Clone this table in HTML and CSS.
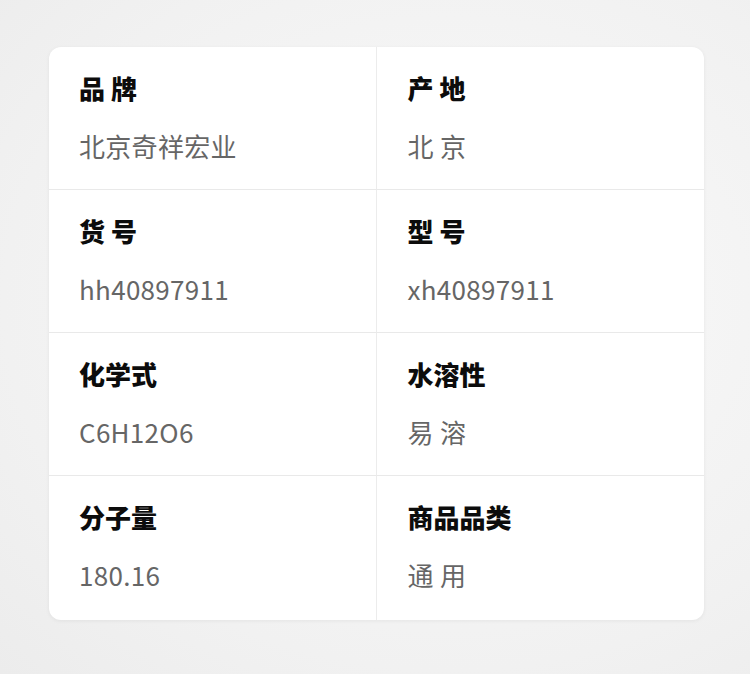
FILE: index.html
```html
<!DOCTYPE html>
<html lang="zh-CN">

<head>
    <meta charset="UTF-8">
    <meta name="viewport" content="width=device-width, initial-scale=1.0">
    <title>商品参数</title>
    <link rel="stylesheet" href="styles.css">
</head>

<body>

    <div class="spec-card">
        <div class="spec-item">
            <h3>品 牌</h3>
            <p>北京奇祥宏业</p>
        </div>
        <div class="spec-item">
            <h3>产 地</h3>
            <p>北 京</p>
        </div>
        <div class="spec-item">
            <h3>货 号</h3>
            <p>hh40897911</p>
        </div>
        <div class="spec-item">
            <h3>型 号</h3>
            <p>xh40897911</p>
        </div>
        <div class="spec-item">
            <h3>化学式</h3>
            <p>C6H12O6</p>
        </div>
        <div class="spec-item">
            <h3>水溶性</h3>
            <p>易 溶</p>
        </div>
        <div class="spec-item">
            <h3>分子量</h3>
            <p>180.16</p>
        </div>
        <div class="spec-item">
            <h3>商品品类</h3>
            <p>通 用</p>
        </div>
    </div>

</body>

</html>
```

FILE: styles.css
```css
/* Resetting styles */
* {
    margin: 0;
    padding: 0;
    box-sizing: border-box;
}

body {
    font-family: "Noto Sans CJK SC", "Noto Sans", sans-serif;
    background: radial-gradient(ellipse at 60% 45%, #fafafa 0%, #f1f1f1 70%, #ececec 100%);
    color: #111;
    min-height: 100vh;
    padding: 47px 46px 0 49px;
}

/* Spec card */
.spec-card {
    background-color: #fff;
    border-radius: 12px;
    box-shadow: 0 1px 4px rgba(0, 0, 0, 0.06);
    display: grid;
    grid-template-columns: 1fr 1fr;
    overflow: hidden;
}

.spec-item {
    height: 143px;
    padding: 23px 30px 0;
    border-bottom: 1px solid #e9e9e9;
}

.spec-item:nth-child(odd) {
    border-right: 1px solid #ececec;
}

.spec-item:nth-child(even) {
    padding-left: 31px;
}

.spec-item:nth-last-child(-n+2) {
    border-bottom: none;
    height: 144px;
}

.spec-item h3 {
    font-size: 26px;
    font-weight: 900;
    line-height: 36px;
    color: #0c0c0c;
}

.spec-item p {
    margin-top: 22px;
    font-size: 26px;
    font-weight: 400;
    line-height: 36px;
    letter-spacing: 0.3px;
    color: #666;
}
```
